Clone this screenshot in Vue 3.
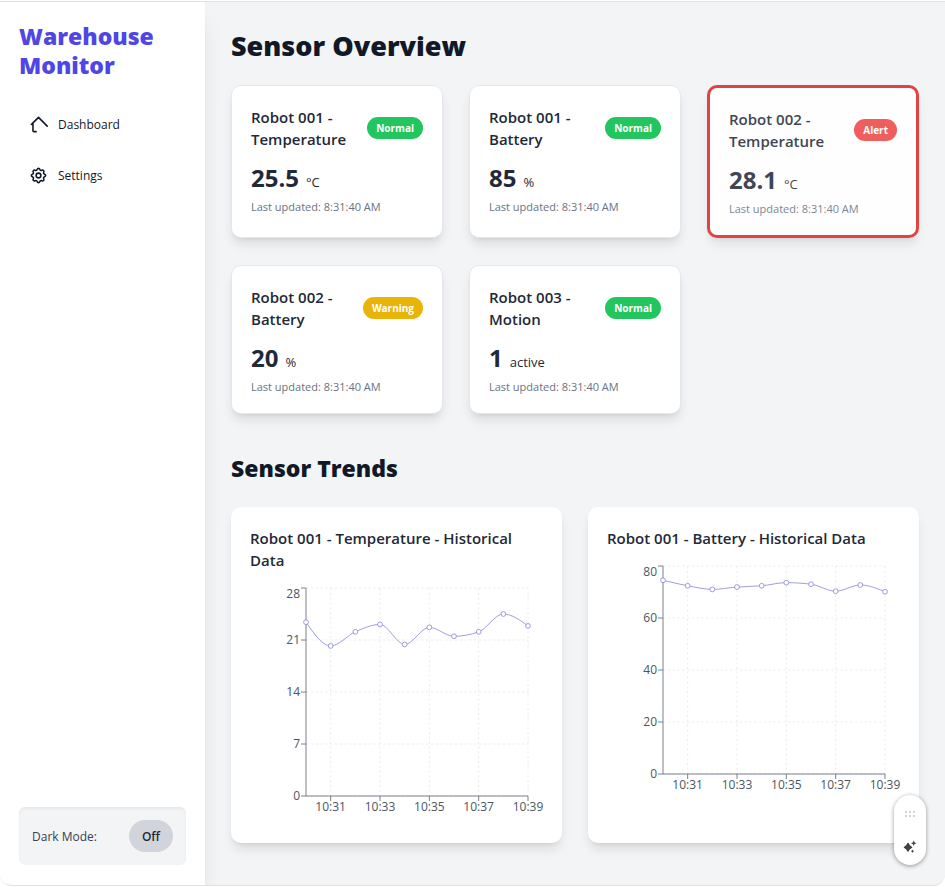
<script setup>
import { ref } from 'vue'

const darkMode = ref(false)

const sensors = [
  { name: 'Robot 001 - Temperature', value: '25.5', unit: '°C', status: 'Normal' },
  { name: 'Robot 001 - Battery', value: '85', unit: '%', status: 'Normal' },
  { name: 'Robot 002 - Temperature', value: '28.1', unit: '°C', status: 'Alert' },
  { name: 'Robot 002 - Battery', value: '20', unit: '%', status: 'Warning' },
  { name: 'Robot 003 - Motion', value: '1', unit: 'active', status: 'Normal' }
]

// Plot area inside the 293 x 240 chart canvas
const plot = { left: 56, right: 278, top: 4, bottom: 212 }

// Monotone cubic interpolation through the points
function curve(pts) {
  const n = pts.length
  const slope = (i) => (pts[i + 1].y - pts[i].y) / (pts[i + 1].x - pts[i].x)
  const t = pts.map((p, i) => {
    if (i === 0 || i === n - 1) return 0
    const a = slope(i - 1)
    const b = slope(i)
    return (Math.sign(a) + Math.sign(b)) * Math.min(Math.abs(a), Math.abs(b), 0.5 * Math.abs((a + b) / 2)) || 0
  })
  t[0] = (3 * slope(0) - t[1]) / 2
  t[n - 1] = (3 * slope(n - 2) - t[n - 2]) / 2
  let d = `M${pts[0].x},${pts[0].y}`
  for (let i = 0; i < n - 1; i++) {
    const p = pts[i]
    const q = pts[i + 1]
    const h = (q.x - p.x) / 3
    d += `C${p.x + h},${p.y + h * t[i]} ${q.x - h},${q.y - h * t[i + 1]} ${q.x},${q.y}`
  }
  return d
}

function makeChart(title, max, values) {
  const step = (plot.right - plot.left) / (values.length - 1)
  const height = plot.bottom - plot.top
  const points = values.map((v, i) => ({
    x: plot.left + i * step,
    y: plot.bottom - (v / max) * height
  }))
  const yTicks = [0, 1, 2, 3, 4].map((i) => ({
    label: (max / 4) * i,
    y: plot.bottom - (height / 4) * i,
    textY: Math.max(plot.bottom - (height / 4) * i, plot.top + 6)
  }))
  const xTicks = [1, 3, 5, 7, 9].map((i) => ({ label: `10:3${i}`, x: points[i].x }))
  return { title, points, yTicks, xTicks, path: curve(points) }
}

const charts = [
  makeChart('Robot 001 - Temperature - Historical Data', 28, [23.4, 20.2, 22.1, 23.1, 20.4, 22.7, 21.5, 22.1, 24.5, 22.9]),
  makeChart('Robot 001 - Battery - Historical Data', 80, [74.5, 72.4, 71, 71.9, 72.4, 73.6, 73, 70.3, 72.7, 70.1])
]
</script>

<template>
  <div class="frame">
    <aside class="sidebar">
      <div class="brand">Warehouse Monitor</div>
      <nav class="nav">
        <a href="#dashboard" class="nav-link">
          <svg class="nav-icon" viewBox="0 0 24 24" aria-hidden="true">
            <path d="M3 12l2-2m0 0l7-7 11 11M5 10v10a1 1 0 001 1h3" />
          </svg>
          <span>Dashboard</span>
        </a>
        <a href="#settings" class="nav-link">
          <svg class="nav-icon" viewBox="0 0 24 24" aria-hidden="true">
            <path d="M10.325 4.317c.426-1.756 2.924-1.756 3.35 0a1.724 1.724 0 002.573 1.066c1.543-.94 3.31.826 2.37 2.37a1.724 1.724 0 001.065 2.572c1.756.426 1.756 2.924 0 3.35a1.724 1.724 0 00-1.066 2.573c.94 1.543-.826 3.31-2.37 2.37a1.724 1.724 0 00-2.572 1.065c-.426 1.756-2.924 1.756-3.35 0a1.724 1.724 0 00-2.573-1.066c-1.543.94-3.31-.826-2.37-2.37a1.724 1.724 0 00-1.065-2.572c-1.756-.426-1.756-2.924 0-3.35a1.724 1.724 0 001.066-2.573c-.94-1.543.826-3.31 2.37-2.37.996.608 2.296.07 2.572-1.065z" />
            <path d="M15 12a3 3 0 11-6 0 3 3 0 016 0z" />
          </svg>
          <span>Settings</span>
        </a>
      </nav>
      <div class="mode">
        <span id="mode-label">Dark Mode:</span>
        <button
          type="button"
          class="mode-button"
          aria-describedby="mode-label"
          :aria-pressed="darkMode"
          @click="darkMode = !darkMode"
        >{{ darkMode ? 'On' : 'Off' }}</button>
      </div>
    </aside>

    <main class="main">
      <h1 class="page-title">Sensor Overview</h1>
      <section class="sensor-grid">
        <article
          v-for="s in sensors"
          :key="s.name"
          class="sensor"
          :class="{ 'sensor-alert': s.status === 'Alert' }"
        >
          <div class="sensor-head">
            <h3 class="card-title">{{ s.name }}</h3>
            <span class="badge" :class="'badge-' + s.status.toLowerCase()">{{ s.status }}</span>
          </div>
          <p class="reading">
            <strong class="reading-value">{{ s.value }}</strong>
            <span class="reading-unit">{{ s.unit }}</span>
          </p>
          <p class="updated">Last updated: 8:31:40 AM</p>
        </article>
      </section>

      <h2 class="section-title">Sensor Trends</h2>
      <section class="chart-grid">
        <article v-for="c in charts" :key="c.title" class="chart-card">
          <h3 class="card-title">{{ c.title }}</h3>
          <svg class="chart" viewBox="0 0 293 240" role="img" :aria-label="c.title">
            <g class="grid-lines">
              <line v-for="t in c.yTicks" :key="'h' + t.label" :x1="plot.left" :x2="plot.right" :y1="t.y" :y2="t.y" />
              <line v-for="t in c.xTicks" :key="'v' + t.label" :x1="t.x" :x2="t.x" :y1="plot.top" :y2="plot.bottom" />
            </g>
            <g class="axis">
              <line :x1="plot.left" :x2="plot.left" :y1="plot.top" :y2="plot.bottom" />
              <line :x1="plot.left" :x2="plot.right" :y1="plot.bottom" :y2="plot.bottom" />
              <line v-for="t in c.yTicks" :key="'y' + t.label" :x1="plot.left - 5" :x2="plot.left" :y1="t.y" :y2="t.y" />
              <line v-for="t in c.xTicks" :key="'x' + t.label" :x1="t.x" :x2="t.x" :y1="plot.bottom" :y2="plot.bottom + 5" />
            </g>
            <g class="tick-text">
              <text v-for="t in c.yTicks" :key="t.label" :x="plot.left - 6" :y="t.textY + 4" text-anchor="end">{{ t.label }}</text>
              <text v-for="t in c.xTicks" :key="t.label" :x="t.x" :y="plot.bottom + 15" text-anchor="middle">{{ t.label }}</text>
            </g>
            <path class="series" :d="c.path" />
            <circle v-for="p in c.points" :key="p.x" class="dot" :cx="p.x" :cy="p.y" r="2.4" />
          </svg>
        </article>
      </section>
    </main>

    <div class="floating">
      <svg class="grip" viewBox="0 0 10 6" aria-hidden="true">
        <circle v-for="i in 6" :key="i" :cx="1 + ((i - 1) % 3) * 4" :cy="i > 3 ? 5 : 1" r="1.2" />
      </svg>
      <button type="button" class="assist" aria-label="Assistant">
        <svg viewBox="0 0 14 14" aria-hidden="true">
          <path d="M5 3.500Q6 6 8.500 7.300Q6 8.500 5 11Q4 8.500 1.500 7.300Q4 6 5 3.500Z" stroke="#404242" stroke-width="1.500" stroke-linejoin="round" />
          <path d="M10.700 .5L11.600 2.400L13.500 3.200L11.600 4L10.700 5.900L9.800 4L7.900 3.200L9.800 2.400Z" />
          <path d="M9.500 9.700L10.900 11.200L9.500 12.700L8.100 11.200Z" />
        </svg>
      </button>
    </div>
  </div>
</template>

<style>
body {
  margin: 0;
  background: #fff;
}
</style>

<style scoped>
* {
  box-sizing: border-box;
}

.frame {
  position: relative;
  display: flex;
  min-height: calc(100vh - 2px);
  margin: 1px 0;
  overflow: hidden;
  border: 0 solid #dfe1e4;
  border-width: 1px 0;
  border-radius: 0 0 12px 12px;
  background: #f3f4f6;
  color: #1f2937;
  font-family: "Open Sans", "Noto Sans", sans-serif;
  font-size: 12px;
}

h1,
h2,
h3,
p {
  margin: 0;
}

.sidebar {
  display: flex;
  flex-direction: column;
  flex: none;
  width: 205px;
  padding: 20px 19px;
  background: #fff;
  box-shadow: 0 16px 20px -4px rgb(0 0 0 / 0.1), 0 6px 8px -5px rgb(0 0 0 / 0.1);
}

.brand {
  margin-bottom: 25px;
  color: #4f46e5;
  font-size: 23px;
  font-weight: 800;
  line-height: 29px;
}

.nav {
  display: flex;
  flex-direction: column;
  gap: 13px;
}

.nav-link {
  display: flex;
  align-items: center;
  gap: 10px;
  height: 38px;
  padding: 0 10px;
  color: #111827;
  text-decoration: none;
}

.nav-icon {
  width: 19px;
  height: 19px;
  overflow: visible;
  fill: none;
  stroke: currentColor;
  stroke-width: 2;
  stroke-linecap: round;
  stroke-linejoin: round;
}

.mode {
  display: flex;
  align-items: center;
  justify-content: space-between;
  margin-top: auto;
  padding: 13px;
  border-radius: 6px;
  background: #f3f4f6;
  box-shadow: inset 0 2px 3px rgb(0 0 0 / 0.05);
  color: #374151;
}

.mode-button {
  width: 44px;
  height: 32px;
  padding: 0;
  border: 0;
  border-radius: 16px;
  background: #d1d5db;
  color: #1f2937;
  font: inherit;
  font-weight: 600;
}

.main {
  flex: 1;
  min-width: 0;
  padding: 25px 26px;
}

.page-title {
  margin-bottom: 20px;
  color: #111827;
  font-size: 27px;
  font-weight: 800;
  line-height: 38px;
}

.sensor-grid {
  display: grid;
  grid-template-columns: repeat(3, minmax(0, 1fr));
  gap: 27px 26px;
}

.sensor {
  padding: 20px 19px 18px;
  border: 1px solid #e5e7eb;
  border-radius: 10px;
  background: #fff;
  box-shadow: 0 8px 12px -2px rgb(0 0 0 / 0.1), 0 3px 5px -3px rgb(0 0 0 / 0.1);
}

.sensor-alert {
  border: 3px solid #dc2626;
  opacity: 0.86;
}

.sensor-head {
  display: flex;
  align-items: center;
  justify-content: space-between;
  margin-bottom: 12px;
}

.card-title {
  font-size: 15px;
  font-weight: 600;
  line-height: 22px;
}

.badge {
  padding: 3px 9px;
  border-radius: 11px;
  color: #fff;
  font-size: 10px;
  font-weight: 700;
  line-height: 16px;
}

.badge-normal {
  background: #22c55e;
}

.badge-warning {
  background: #eab308;
}

.badge-alert {
  background: #ef4444;
}

.reading {
  display: flex;
  align-items: baseline;
  gap: 7px;
  height: 32px;
  margin-bottom: 5px;
  line-height: 32px;
}

.reading-value {
  font-size: 24px;
  font-weight: 700;
}

.reading-unit {
  font-size: 13px;
}

.updated {
  color: #6b7280;
  font-size: 11px;
  line-height: 16px;
}

.section-title {
  margin: 38px 0 23px;
  color: #111827;
  font-size: 23px;
  font-weight: 800;
  line-height: 32px;
}

.chart-grid {
  display: grid;
  grid-template-columns: repeat(2, minmax(0, 1fr));
  gap: 26px;
}

.chart-card {
  padding: 20px 19px 19px;
  border-radius: 10px;
  background: #fff;
  box-shadow: 0 8px 12px -2px rgb(0 0 0 / 0.1), 0 3px 5px -3px rgb(0 0 0 / 0.1);
}

.chart {
  display: block;
  width: 100%;
  height: auto;
  margin-top: 13px;
}

.grid-lines {
  stroke: #e5e7eb;
  stroke-width: 0.8;
  stroke-dasharray: 2.4 2.4;
}

.axis {
  stroke: #6b7280;
  stroke-width: 0.9;
}

.tick-text {
  fill: #4b5563;
  font-size: 12px;
}

.series {
  fill: none;
  stroke: #8884d8;
  stroke-width: 0.8;
}

.dot {
  fill: #fff;
  stroke: #8884d8;
  stroke-width: 0.8;
}

.floating {
  position: absolute;
  right: 19px;
  bottom: 20px;
  display: flex;
  flex-direction: column;
  align-items: center;
  justify-content: space-between;
  width: 32px;
  height: 70px;
  padding: 16px 0 11px;
  border-radius: 16px;
  background: #fff;
  box-shadow: 0 1px 4px rgb(0 0 0 / 0.4);
}

.grip {
  width: 10px;
  height: 6px;
  overflow: visible;
  fill: #d4d4d4;
}

.assist {
  display: flex;
  padding: 0;
  border: 0;
  background: none;
}

.assist svg {
  width: 14px;
  height: 14px;
  fill: #404242;
}
</style>
